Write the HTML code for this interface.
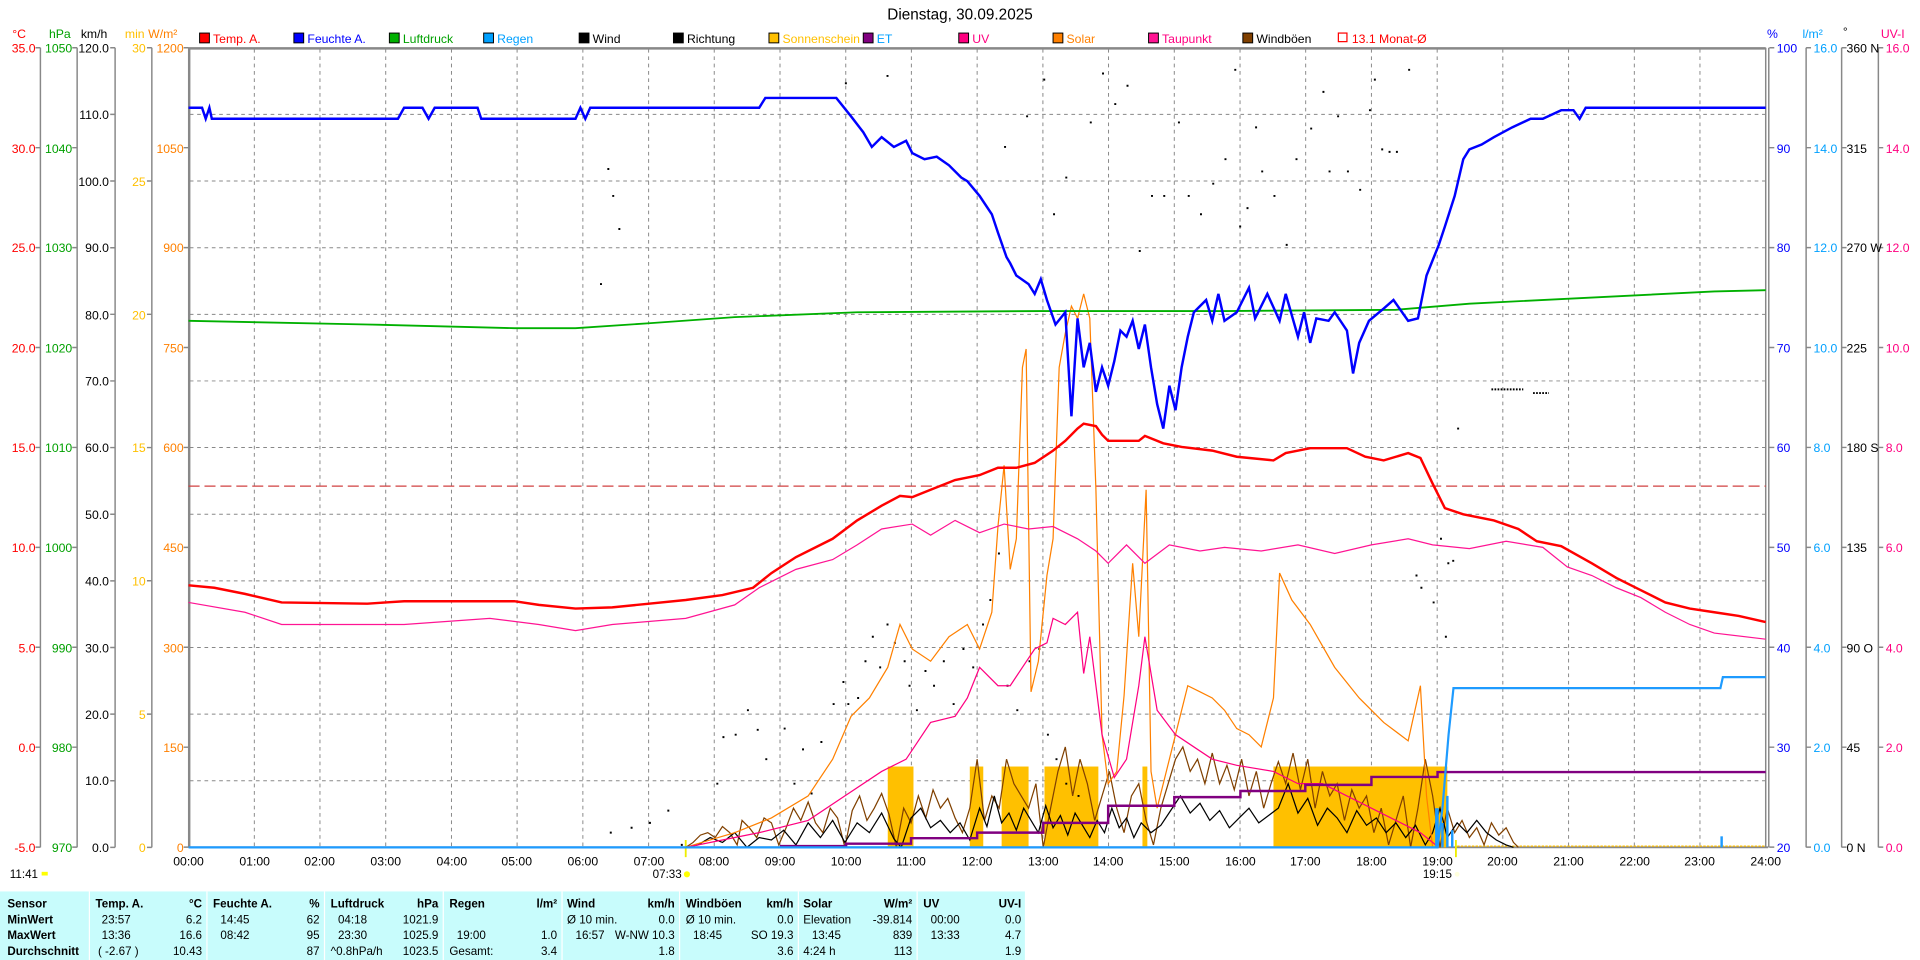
<!DOCTYPE html>
<html><head><meta charset="utf-8"><style>
html,body{margin:0;padding:0;background:#fff;width:1920px;height:960px;overflow:hidden}
svg{display:block}
text{font-family:"Liberation Sans",sans-serif;font-size:10px}
.tb text{font-size:9.5px}
.b{font-weight:bold}
</style></head><body>
<svg width="1920" height="960" viewBox="0 0 1568 784" preserveAspectRatio="none" xmlns="http://www.w3.org/2000/svg">
<rect width="1568" height="784" fill="#fff"/>
<text x="784" y="16" text-anchor="middle" style="font-size:12.5px">Dienstag, 30.09.2025</text>
<g>
<text x="10" y="31" fill="#f00">°C</text>
<text x="40" y="31" fill="#00a000">hPa</text>
<text x="66" y="31">km/h</text>
<text x="102" y="31" fill="#ffc000">min</text>
<text x="121" y="31" fill="#ff8000">W/m²</text>
<text x="1443" y="31" fill="#0000ff">%</text>
<text x="1472" y="31" fill="#00a0ff">l/m²</text>
<text x="1505" y="29">°</text>
<text x="1536" y="31" fill="#ff0080">UV-I</text>
</g>
<g>
<rect x="163" y="27" width="8" height="8" fill="#f00" stroke="#000" stroke-width="0.8"/><text x="174" y="35" fill="#f00">Temp. A.</text>
<rect x="240" y="27" width="8" height="8" fill="#00f" stroke="#000" stroke-width="0.8"/><text x="251" y="35" fill="#00f">Feuchte A.</text>
<rect x="318" y="27" width="8" height="8" fill="#00b000" stroke="#000" stroke-width="0.8"/><text x="329" y="35" fill="#00a000">Luftdruck</text>
<rect x="395" y="27" width="8" height="8" fill="#00a0ff" stroke="#000" stroke-width="0.8"/><text x="406" y="35" fill="#00a0ff">Regen</text>
<rect x="473" y="27" width="8" height="8" fill="#000" stroke="#000" stroke-width="0.8"/><text x="484" y="35">Wind</text>
<rect x="550" y="27" width="8" height="8" fill="#000" stroke="#000" stroke-width="0.8"/><text x="561" y="35">Richtung</text>
<rect x="628" y="27" width="8" height="8" fill="#ffc000" stroke="#000" stroke-width="0.8"/><text x="639" y="35" fill="#ffc000">Sonnenschein</text>
<rect x="705" y="27" width="8" height="8" fill="#800080" stroke="#000" stroke-width="0.8"/><text x="716" y="35" fill="#00a0ff">ET</text>
<rect x="783" y="27" width="8" height="8" fill="#ff0080" stroke="#000" stroke-width="0.8"/><text x="794" y="35" fill="#ff0080">UV</text>
<rect x="860" y="27" width="8" height="8" fill="#ff8000" stroke="#000" stroke-width="0.8"/><text x="871" y="35" fill="#ff8000">Solar</text>
<rect x="938" y="27" width="8" height="8" fill="#ff1493" stroke="#000" stroke-width="0.8"/><text x="949" y="35" fill="#ff0080">Taupunkt</text>
<rect x="1015" y="27" width="8" height="8" fill="#804000" stroke="#000" stroke-width="0.8"/><text x="1026" y="35">Windböen</text>
<rect x="1093" y="27" width="7" height="7" fill="none" stroke="#f00" stroke-width="1"/><text x="1104" y="35" fill="#f00">13.1 Monat-Ø</text>
</g>
<path fill="none" stroke="#888" stroke-width="0.8" stroke-dasharray="3,3" d="M207.7,40V692M261.3,40V692M315,40V692M368.7,40V692M422.3,40V692M476,40V692M529.7,40V692M583.3,40V692M637,40V692M690.7,40V692M744.3,40V692M798,40V692M851.7,40V692M905.3,40V692M959,40V692M1012.7,40V692M1066.3,40V692M1120,40V692M1173.7,40V692M1227.3,40V692M1281,40V692M1334.7,40V692M1388.3,40V692M155,93.4H1442M155,147.8H1442M155,202.3H1442M155,256.7H1442M155,311.1H1442M155,365.5H1442M155,420H1442M155,474.4H1442M155,528.8H1442M155,583.2H1442M155,637.6H1442"/>
<line x1="154.5" y1="39" x2="154.5" y2="692" stroke="#888" stroke-width="2"/>
<line x1="154" y1="39.5" x2="1442" y2="39.5" stroke="#888" stroke-width="2"/>
<line x1="1442" y1="39" x2="1442" y2="692" stroke="#888" stroke-width="1.2"/>
<line x1="1444.5" y1="39" x2="1444.5" y2="692" stroke="#888" stroke-width="1.2"/>
<line x1="154" y1="692" x2="1444" y2="692" stroke="#888" stroke-width="1.5"/>
<path fill="none" stroke="#888" stroke-width="1.2" d="M33,39V692M29,39H33M29,120.6H33M29,202.2H33M29,283.8H33M29,365.4H33M29,447H33M29,528.6H33M29,610.2H33M29,691.8H33
M63,39V692M59,39H63M59,120.6H63M59,202.2H63M59,283.8H63M59,365.4H63M59,447H63M59,528.6H63M59,610.2H63M59,691.8H63
M94,39V692M90,39H94M90,93.4H94M90,147.8H94M90,202.3H94M90,256.7H94M90,311.1H94M90,365.5H94M90,420H94M90,474.4H94M90,528.8H94M90,583.2H94M90,637.6H94M90,692H94
M124,39V692M120,39H124M120,147.8H124M120,256.7H124M120,365.5H124M120,474.3H124M120,583.2H124M120,692H124
M150,39H154M150,120.6H154M150,202.2H154M150,283.8H154M150,365.4H154M150,447H154M150,528.6H154M150,610.2H154M150,691.8H154
M1445,39H1449M1445,120.6H1449M1445,202.2H1449M1445,283.8H1449M1445,365.4H1449M1445,447H1449M1445,528.6H1449M1445,610.2H1449M1445,691.8H1449
M1475,39V692M1475,39H1479M1475,120.6H1479M1475,202.2H1479M1475,283.8H1479M1475,365.4H1479M1475,447H1479M1475,528.6H1479M1475,610.2H1479M1475,691.8H1479
M1504,39V692M1504,39H1508M1504,120.6H1508M1504,202.2H1508M1504,283.8H1508M1504,365.4H1508M1504,447H1508M1504,528.6H1508M1504,610.2H1508M1504,691.8H1508
M1534,39V692M1534,39H1538M1534,120.6H1538M1534,202.2H1538M1534,283.8H1538M1534,365.4H1538M1534,447H1538M1534,528.6H1538M1534,610.2H1538M1534,691.8H1538"/>
<g text-anchor="end" fill="#f00">
<text x="29" y="43">35.0</text><text x="29" y="125">30.0</text><text x="29" y="206">25.0</text><text x="29" y="288">20.0</text><text x="29" y="369">15.0</text><text x="29" y="451">10.0</text><text x="29" y="533">5.0</text><text x="29" y="614">0.0</text><text x="29" y="696">-5.0</text>
</g>
<g text-anchor="end" fill="#00a000">
<text x="59" y="43">1050</text><text x="59" y="125">1040</text><text x="59" y="206">1030</text><text x="59" y="288">1020</text><text x="59" y="369">1010</text><text x="59" y="451">1000</text><text x="59" y="533">990</text><text x="59" y="614">980</text><text x="59" y="696">970</text>
</g>
<g text-anchor="end" fill="#000">
<text x="89" y="43">120.0</text><text x="89" y="97">110.0</text><text x="89" y="152">100.0</text><text x="89" y="206">90.0</text><text x="89" y="261">80.0</text><text x="89" y="315">70.0</text><text x="89" y="369">60.0</text><text x="89" y="424">50.0</text><text x="89" y="478">40.0</text><text x="89" y="533">30.0</text><text x="89" y="587">20.0</text><text x="89" y="641">10.0</text><text x="89" y="696">0.0</text>
</g>
<g text-anchor="end" fill="#ffc000">
<text x="119" y="43">30</text><text x="119" y="152">25</text><text x="119" y="261">20</text><text x="119" y="369">15</text><text x="119" y="478">10</text><text x="119" y="587">5</text><text x="119" y="696">0</text>
</g>
<g text-anchor="end" fill="#ff8000">
<text x="150" y="43">1200</text><text x="150" y="125">1050</text><text x="150" y="206">900</text><text x="150" y="288">750</text><text x="150" y="369">600</text><text x="150" y="451">450</text><text x="150" y="533">300</text><text x="150" y="614">150</text><text x="150" y="696">0</text>
</g>
<g fill="#0000ff">
<text x="1451" y="43">100</text><text x="1451" y="125">90</text><text x="1451" y="206">80</text><text x="1451" y="288">70</text><text x="1451" y="369">60</text><text x="1451" y="451">50</text><text x="1451" y="533">40</text><text x="1451" y="614">30</text><text x="1451" y="696">20</text>
</g>
<g fill="#00a0ff">
<text x="1481" y="43">16.0</text><text x="1481" y="125">14.0</text><text x="1481" y="206">12.0</text><text x="1481" y="288">10.0</text><text x="1481" y="369">8.0</text><text x="1481" y="451">6.0</text><text x="1481" y="533">4.0</text><text x="1481" y="614">2.0</text><text x="1481" y="696">0.0</text>
</g>
<g fill="#000">
<text x="1508" y="43">360 N</text><text x="1508" y="125">315</text><text x="1508" y="206">270 W</text><text x="1508" y="288">225</text><text x="1508" y="369">180 S</text><text x="1508" y="451">135</text><text x="1508" y="533">90 O</text><text x="1508" y="614">45</text><text x="1508" y="696">0 N</text>
</g>
<g fill="#ff0080">
<text x="1540" y="43">16.0</text><text x="1540" y="125">14.0</text><text x="1540" y="206">12.0</text><text x="1540" y="288">10.0</text><text x="1540" y="369">8.0</text><text x="1540" y="451">6.0</text><text x="1540" y="533">4.0</text><text x="1540" y="614">2.0</text><text x="1540" y="696">0.0</text>
</g>
<g text-anchor="middle" style="font-size:9.5px">
<text x="154" y="707">00:00</text><text x="208" y="707">01:00</text><text x="261" y="707">02:00</text><text x="315" y="707">03:00</text><text x="369" y="707">04:00</text><text x="422" y="707">05:00</text><text x="476" y="707">06:00</text><text x="530" y="707">07:00</text><text x="583" y="707">08:00</text><text x="637" y="707">09:00</text><text x="691" y="707">10:00</text><text x="744" y="707">11:00</text><text x="798" y="707">12:00</text><text x="852" y="707">13:00</text><text x="905" y="707">14:00</text><text x="959" y="707">15:00</text><text x="1013" y="707">16:00</text><text x="1066" y="707">17:00</text><text x="1120" y="707">18:00</text><text x="1174" y="707">19:00</text><text x="1227" y="707">20:00</text><text x="1281" y="707">21:00</text><text x="1335" y="707">22:00</text><text x="1388" y="707">23:00</text><text x="1442" y="707">24:00</text>
</g>
<text x="8" y="717" style="font-size:9.5px">11:41</text><rect x="34" y="712" width="5" height="3" fill="#ff0"/>
<text x="533" y="717" style="font-size:9.5px">07:33</text><circle cx="561" cy="714" r="2.5" fill="#ff0"/>
<text x="1162" y="717" style="font-size:9.5px">19:15</text><circle cx="1190" cy="714" r="2" fill="#ffd"/>
<line x1="560" y1="686" x2="560" y2="700" stroke="#ee0" stroke-width="1.5"/>
<line x1="1189" y1="686" x2="1189" y2="700" stroke="#ee0" stroke-width="1.5"/>
<g fill="#ffc000">
<rect x="725" y="626" width="21" height="66"/><rect x="792" y="626" width="11" height="66"/><rect x="818" y="626" width="22" height="66"/><rect x="853" y="626" width="44" height="66"/><rect x="933" y="626" width="4" height="66"/><rect x="1040" y="626" width="138" height="66"/><rect x="1178" y="626" width="4" height="66"/>
</g>
<line x1="1190" y1="691" x2="1442" y2="691" stroke="#ffc000" stroke-width="1" stroke-dasharray="2,1"/>
<line x1="154" y1="397" x2="1442" y2="397" stroke="#d04040" stroke-width="1" stroke-dasharray="9,4"/>
<polyline fill="none" stroke="#804000" stroke-width="1" points="560,692 566,688 572,682 578,680 584,684 590,675 596,680 602,690 606,670 612,676 618,684 624,668 630,672 636,690 642,676 648,660 654,670 660,655 666,672 672,680 678,660 684,668 690,692 696,662 702,650 708,670 714,660 720,648 726,665 732,692 738,660 744,672 750,650 756,668 762,645 768,660 774,652 780,668 786,680 792,660 798,620 804,670 810,650 816,660 822,620 828,640 834,650 840,660 846,640 852,692 858,660 864,630 870,610 876,650 882,620 888,640 894,670 900,650 906,630 912,660 918,680 924,650 930,640 936,670 942,690 948,660 954,640 960,620 966,610 972,630 978,620 984,640 990,615 996,640 1002,625 1008,645 1014,620 1020,650 1026,630 1032,660 1038,640 1044,622 1050,640 1056,615 1062,645 1068,620 1074,660 1080,630 1086,650 1092,640 1098,670 1104,645 1110,660 1116,650 1122,680 1128,660 1134,690 1140,670 1146,650 1152,692 1158,660 1164,620 1170,650 1176,692 1182,660 1188,680 1194,670 1200,684 1206,676 1212,690 1218,672 1224,682 1230,676 1236,688 1240,692"/>
<polyline fill="none" stroke="#000" stroke-width="1" points="560,692 570,690 580,684 590,688 600,680 610,692 620,684 630,686 640,678 650,690 660,672 670,684 680,670 690,688 700,672 710,680 720,664 730,685 736,692 744,668 752,660 760,676 768,670 776,680 784,672 792,686 800,660 806,675 812,650 818,672 824,664 830,678 836,660 842,670 848,680 854,658 860,676 866,666 872,682 878,664 884,674 890,684 896,670 902,680 908,660 914,676 920,668 926,684 932,672 940,680 948,674 956,662 964,650 972,664 980,656 988,670 996,662 1004,676 1012,668 1020,660 1028,672 1036,666 1044,660 1052,640 1060,664 1068,652 1076,674 1084,660 1092,668 1100,680 1108,662 1116,674 1124,668 1132,680 1140,672 1148,684 1156,674 1164,690 1170,680 1176,660 1182,684 1190,672 1198,680 1206,670 1214,680 1222,686 1230,690 1236,692"/>
<path fill="none" stroke="#000" stroke-width="1.6" d="M496,138h1.6M500,160h1.6M505,187h1.6M490,232h1.6M498,680h1.6M515,676h1.6M530,672h1.6M545,662h1.6M556,690h1.6M585,640h1.6M590,602h1.6M600,600h1.6M610,580h1.6M618,596h1.6M625,620h1.6M640,595h1.6M648,640h1.6M655,612h1.6M662,648h1.6M670,606h1.6M680,575h1.6M688,557h1.6M692,575h1.6M700,570h1.6M706,540h1.6M712,520h1.6M718,545h1.6M724,510h1.6M730,525h1.6M738,540h1.6M742,560h1.6M748,580h1.6M755,548h1.6M762,560h1.6M770,540h1.6M778,575h1.6M786,530h1.6M794,545h1.6M802,510h1.6M808,490h1.6M815,452h1.6M822,560h1.6M830,580h1.6M840,540h1.6M848,530h1.6M855,600h1.6M862,620h1.6M870,640h1.6M880,650h1.6M690,68h1.6M724,62h1.6M820,120h1.6M838,95h1.6M852,65h1.6M860,175h1.6M870,145h1.6M890,100h1.6M900,60h1.6M910,85h1.6M920,70h1.6M930,205h1.6M940,160h1.6M950,160h1.6M962,100h1.6M970,160h1.6M980,175h1.6M990,150h1.6M1000,130h1.6M1008,57h1.6M1012,185h1.6M1018,170h1.6M1025,104h1.6M1030,140h1.6M1040,160h1.6M1050,200h1.6M1058,130h1.6M1070,105h1.6M1080,75h1.6M1085,140h1.6M1092,95h1.6M1100,140h1.6M1110,155h1.6M1118,90h1.6M1122,65h1.6M1128,122h1.6M1134,124h1.6M1140,124h1.6M1150,57h1.6M1156,470h1.6M1160,480h1.6M1170,492h1.6M1176,440h1.6M1182,460h1.6M1186,458h1.6M1190,350h1.6M1180,520h1.6"/>
<path fill="none" stroke="#000" stroke-width="1.6" stroke-dasharray="1.4,1.1" d="M1218,318h26M1252,321h13"/>
<polyline fill="none" stroke="#ff8000" stroke-width="1" points="560,692 583,685 600,680 630,668 660,650 680,620 695,585 710,570 725,545 735,510 745,530 760,540 775,520 790,510 800,530 810,500 815,430 820,380 825,465 830,440 835,300 838,285 842,565 848,540 855,470 860,440 865,300 870,272 875,250 880,260 885,240 890,260 895,400 900,600 905,640 912,630 918,568 925,460 930,520 936,400 940,630 945,660 960,600 970,560 980,565 990,570 1000,580 1010,595 1020,600 1030,610 1040,570 1045,468 1055,490 1070,510 1090,545 1110,570 1130,590 1150,605 1160,560 1165,650 1170,692"/>
<polyline fill="none" stroke="#ff0080" stroke-width="1" points="560,692 620,680 660,670 690,650 720,630 740,620 760,590 780,585 790,570 800,545 815,560 825,560 835,545 845,530 855,525 860,505 870,510 880,500 885,550 890,520 900,600 910,635 920,620 930,560 935,520 945,580 960,600 975,610 990,620 1010,625 1040,630 1060,640 1080,640 1100,650 1120,660 1140,670 1160,680 1175,692"/>
<polyline fill="none" stroke="#ff1493" stroke-width="1" points="154,492 200,500 230,510 330,510 400,505 440,510 470,515 500,510 560,505 600,494 620,480 650,465 680,457 700,445 720,432 745,428 760,437 780,425 800,435 820,428 840,432 860,430 880,440 895,450 905,460 920,445 935,460 955,445 980,450 1000,447 1030,450 1060,445 1090,452 1120,445 1150,440 1170,445 1200,448 1230,442 1260,447 1280,463 1300,470 1320,480 1340,488 1360,500 1380,510 1400,517 1442,522"/>
<polyline fill="none" stroke="#800080" stroke-width="2" points="637,691 691,691 691,689 744,689 744,684.5 798,684.5 798,680 852,680 852,672 905,672 905,658 959,658 959,651 1013,651 1013,646 1066,646 1066,641 1120,641 1120,634.5 1174,634.5 1174,630.5 1442,630.5"/>
<polyline fill="none" stroke="#1e9bff" stroke-width="1.8" points="154,692 1174,692 1178,660 1183,600 1187,562 1405,562 1407,553 1442,553"/>
<g fill="#1e9bff"><rect x="1172" y="660" width="3" height="32"/><rect x="1177" y="672" width="2" height="20"/><rect x="1181" y="650" width="2" height="42"/><rect x="1185" y="678" width="2" height="14"/><rect x="1405" y="683" width="2" height="9"/></g>
<polyline fill="none" stroke="#00b000" stroke-width="1.5" points="154,262 300,265 420,268 470,268 530,264 600,259 700,255 850,254 1000,254 1140,253 1200,248 1300,243 1400,238 1442,237"/>
<polyline fill="none" stroke="#f00" stroke-width="2" points="154,478 175,480 200,485 230,492 300,493 315,492 330,491 420,491 440,494 470,497 500,496 530,493 560,490 590,486 615,480 630,468 650,455 680,440 700,425 720,413 735,405 745,406 760,400 780,392 800,388 815,382 830,382 845,378 860,368 870,360 880,350 885,346 895,348 900,355 905,360 920,360 930,360 935,356 950,362 965,365 990,368 1010,373 1040,376 1050,370 1070,366 1100,366 1115,373 1130,376 1150,370 1160,374 1170,395 1180,415 1195,420 1220,425 1240,432 1255,442 1275,446 1300,460 1320,472 1340,482 1360,492 1380,497 1400,500 1420,503 1442,508"/>
<polyline fill="none" stroke="#00f" stroke-width="2" points="154,88 165,88 168,97 171,88 173,97 325,97 330,88 345,88 350,97 355,88 390,88 393,97 470,97 474,88 478,97 482,88 505,88 620,88 625,80 683,80 695,95 705,108 712,120 720,112 730,120 740,115 745,125 755,130 765,128 775,135 785,145 790,148 800,160 810,175 815,190 822,210 825,215 830,225 840,232 845,240 850,228 855,245 862,265 870,255 875,340 880,260 885,300 890,280 895,320 900,300 905,315 910,295 915,270 920,275 925,262 930,285 935,265 940,300 945,330 950,350 955,315 960,335 965,300 970,275 975,255 985,245 990,262 995,240 1000,262 1010,255 1020,235 1025,260 1035,240 1045,262 1050,240 1060,275 1065,255 1070,280 1075,260 1085,262 1090,255 1100,270 1105,305 1110,280 1118,262 1130,252 1138,245 1150,262 1158,260 1165,225 1175,200 1180,185 1188,160 1195,130 1200,122 1210,118 1220,112 1235,104 1250,97 1260,97 1275,90 1285,90 1290,97 1295,88 1442,88"/>
<rect x="0" y="728" width="837" height="56" fill="#c8fcfc"/>
<g stroke="#fff" stroke-width="1"><line x1="73" y1="728" x2="73" y2="784"/><line x1="169" y1="728" x2="169" y2="784"/><line x1="265" y1="728" x2="265" y2="784"/><line x1="362" y1="728" x2="362" y2="784"/><line x1="459" y1="728" x2="459" y2="784"/><line x1="555" y1="728" x2="555" y2="784"/><line x1="652" y1="728" x2="652" y2="784"/><line x1="749" y1="728" x2="749" y2="784"/></g>
<g class="tb">
<g class="b"><text x="6" y="741">Sensor</text><text x="6" y="754">MinWert</text><text x="6" y="767">MaxWert</text><text x="6" y="780">Durchschnitt</text>
<text x="78" y="741">Temp. A.</text><text x="174" y="741">Feuchte A.</text><text x="270" y="741">Luftdruck</text><text x="367" y="741">Regen</text><text x="463" y="741">Wind</text><text x="560" y="741">Windböen</text><text x="656" y="741">Solar</text><text x="754" y="741">UV</text></g>
<g text-anchor="end" class="b"><text x="165" y="741">°C</text><text x="261" y="741">%</text><text x="358" y="741">hPa</text><text x="455" y="741">l/m²</text><text x="551" y="741">km/h</text><text x="648" y="741">km/h</text><text x="745" y="741">W/m²</text><text x="834" y="741">UV-I</text></g>
<text x="83" y="754">23:57</text><text x="83" y="767">13:36</text><text x="80" y="780">( -2.67 )</text>
<text x="180" y="754">14:45</text><text x="180" y="767">08:42</text>
<text x="276" y="754">04:18</text><text x="276" y="767">23:30</text><text x="270" y="780">^0.8hPa/h</text>
<text x="373" y="767">19:00</text><text x="367" y="780">Gesamt:</text>
<text x="463" y="754">Ø 10 min.</text><text x="470" y="767">16:57</text>
<text x="560" y="754">Ø 10 min.</text><text x="566" y="767">18:45</text>
<text x="656" y="754">Elevation</text><text x="663" y="767">13:45</text><text x="656" y="780">4:24 h</text>
<text x="760" y="754">00:00</text><text x="760" y="767">13:33</text>
<g text-anchor="end">
<text x="165" y="754">6.2</text><text x="165" y="767">16.6</text><text x="165" y="780">10.43</text>
<text x="261" y="754">62</text><text x="261" y="767">95</text><text x="261" y="780">87</text>
<text x="358" y="754">1021.9</text><text x="358" y="767">1025.9</text><text x="358" y="780">1023.5</text>
<text x="455" y="767">1.0</text><text x="455" y="780">3.4</text>
<text x="551" y="754">0.0</text><text x="551" y="767">W-NW 10.3</text><text x="551" y="780">1.8</text>
<text x="648" y="754">0.0</text><text x="648" y="767">SO 19.3</text><text x="648" y="780">3.6</text>
<text x="745" y="754">-39.814</text><text x="745" y="767">839</text><text x="745" y="780">113</text>
<text x="834" y="754">0.0</text><text x="834" y="767">4.7</text><text x="834" y="780">1.9</text>
</g>
</g>
</svg>
</body></html>
